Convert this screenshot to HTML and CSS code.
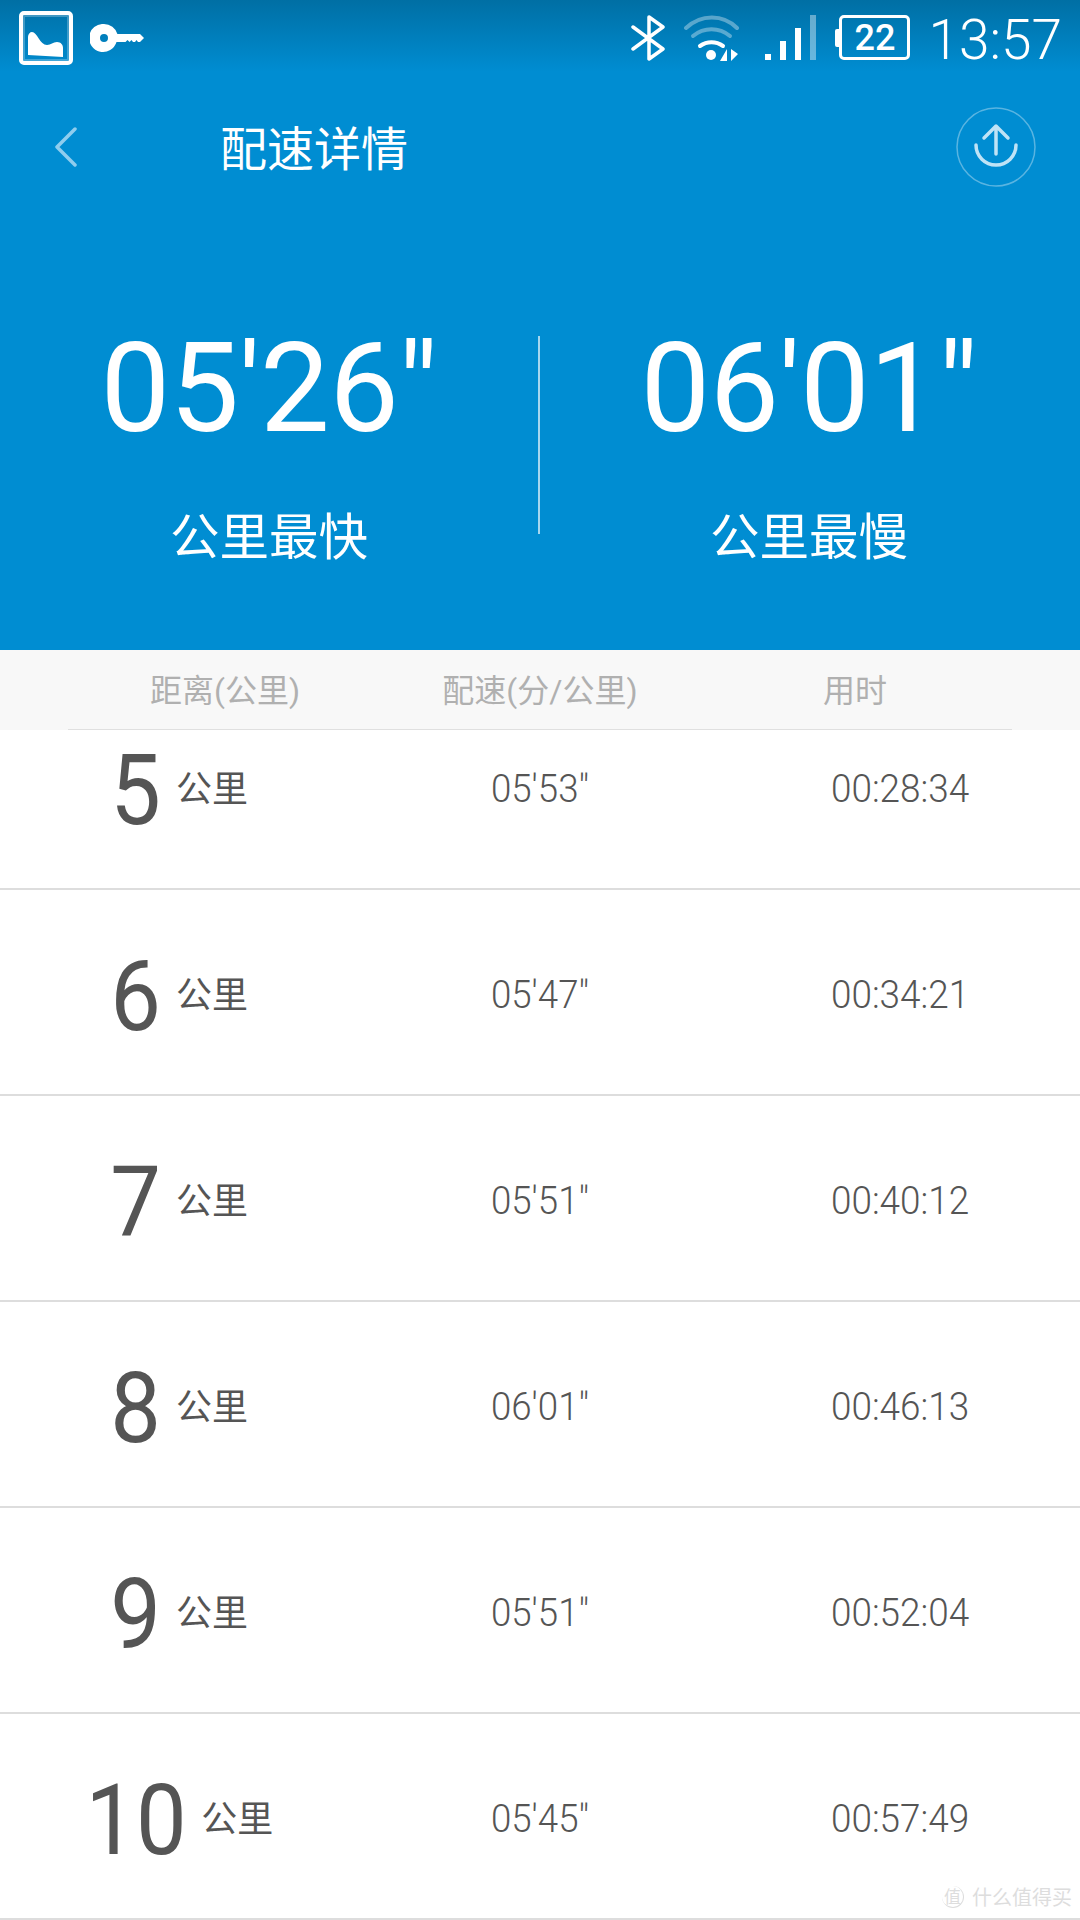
FILE: index.html
```html
<!DOCTYPE html>
<html>
<head>
    <meta charset="utf-8">
    <title>配速详情</title>
    <link rel="stylesheet" href="styles.css">
</head>
<body>
    <div class="hero">
        <div class="statusbar">
            <div class="status-left">
                <svg class="ic-image" width="54" height="54" viewBox="0 0 54 54">
                    <rect x="2" y="2" width="50" height="50" rx="3" fill="none" stroke="#fff" stroke-width="4"/>
                    <rect x="5" y="5" width="44" height="44" fill="none" stroke="#fff" stroke-opacity=".25" stroke-width="2"/>
                    <path d="M9 44V26c0-3 2-5 4-5 5 0 8 13 15 13 4 0 6-3 10-3 4 0 6 3 6 6v9z" fill="#fff"/>
                </svg>
                <svg class="ic-key" width="54" height="28" viewBox="0 0 54 28">
                    <path fill-rule="evenodd" d="M14 0a14 14 0 0 1 13.400 10H50l4 4-4 4h-2l-1.500-2-1.500 2h-2l-1.500-2-2 2-2-2-2 2h-9A14 14 0 1 1 14 0zm0 10a4 4 0 1 0 0 8 4 4 0 0 0 0-8z" fill="#fff"/>
                </svg>
            </div>
            <div class="status-right">
                <svg class="ic-bt" width="37" height="46" viewBox="0 0 37 46">
                    <path d="M2 12l30 22-14 10V2l14 10L2 34" fill="none" stroke="#fff" stroke-width="3.500" stroke-linejoin="round" stroke-linecap="round"/>
                </svg>
                <svg class="ic-wifi" width="56" height="46" viewBox="0 0 56 46">
                    <path d="M2 13C17 -1 39 -1 53 13" fill="none" stroke="#fff" stroke-opacity=".35" stroke-width="4" stroke-linecap="round"/>
                    <path d="M9 21c11-9 26-9 37 0" fill="none" stroke="#fff" stroke-opacity=".35" stroke-width="4" stroke-linecap="round"/>
                    <path d="M16 31c7-5 16-5 23 0" fill="none" stroke="#fff" stroke-width="4" stroke-linecap="round"/>
                    <circle cx="27" cy="40" r="5" fill="#fff"/>
                    <path d="M43 34v12h-7zM47 34v12l7-7z" fill="#fff"/>
                </svg>
                <svg class="ic-signal" width="51" height="45" viewBox="0 0 51 45">
                    <rect x="0" y="39" width="6" height="6" fill="#fff"/>
                    <rect x="15" y="26" width="6" height="19" fill="#fff"/>
                    <rect x="30" y="13" width="6" height="32" fill="#fff"/>
                    <rect x="45" y="0" width="6" height="45" fill="#fff" opacity=".4"/>
                </svg>
                <div class="battery"><span class="battery-text">22</span></div>
                <span class="clock">13:57</span>
            </div>
        </div>

        <div class="navbar">
            <svg class="ic-back" width="24" height="40" viewBox="0 0 24 40">
                <path d="M21 2L3 20l18 18" fill="none" stroke="#8fcdee" stroke-width="3.500" stroke-linecap="round" stroke-linejoin="round"/>
            </svg>
            <span class="nav-title">配速详情</span>
            <svg class="ic-share" width="80" height="80" viewBox="0 0 80 80">
                <circle cx="40" cy="40" r="39" fill="none" stroke="#fff" stroke-opacity=".35" stroke-width="1.500"/>
                <path d="M40 47V20M28 31l12-12 12 12" fill="none" stroke="#bfe3f6" stroke-width="3.500" stroke-linecap="round" stroke-linejoin="round"/>
                <path d="M20 38a20 20 0 1 0 40 0" fill="none" stroke="#bfe3f6" stroke-width="3.500" stroke-linecap="round"/>
            </svg>
        </div>

        <div class="stats">
            <div class="stat">
                <div class="stat-value">05'26"</div>
                <div class="stat-label">公里最快</div>
            </div>
            <div class="stat-divider"></div>
            <div class="stat">
                <div class="stat-value">06'01"</div>
                <div class="stat-label">公里最慢</div>
            </div>
        </div>
    </div>

    <div class="table-head">
        <span>距离(公里)</span>
        <span>配速(分/公里)</span>
        <span>用时</span>
    </div>

    <div class="rows">
        <div class="row row-cut">
            <div class="dist"><span class="num">5</span><span class="unit">公里</span></div>
            <div class="pace">05'53"</div>
            <div class="time">00:28:34</div>
        </div>
        <div class="row">
            <div class="dist"><span class="num">6</span><span class="unit">公里</span></div>
            <div class="pace">05'47"</div>
            <div class="time">00:34:21</div>
        </div>
        <div class="row">
            <div class="dist"><span class="num">7</span><span class="unit">公里</span></div>
            <div class="pace">05'51"</div>
            <div class="time">00:40:12</div>
        </div>
        <div class="row">
            <div class="dist"><span class="num">8</span><span class="unit">公里</span></div>
            <div class="pace">06'01"</div>
            <div class="time">00:46:13</div>
        </div>
        <div class="row">
            <div class="dist"><span class="num">9</span><span class="unit">公里</span></div>
            <div class="pace">05'51"</div>
            <div class="time">00:52:04</div>
        </div>
        <div class="row">
            <div class="dist dist-wide"><span class="num">10</span><span class="unit">公里</span></div>
            <div class="pace">05'45"</div>
            <div class="time">00:57:49</div>
        </div>
    </div>

    <div class="watermark"><span class="watermark-badge">值</span>什么值得买</div>
</body>
</html>
```

FILE: styles.css
```css
* { box-sizing: border-box; }
body { margin: 0; width: 1080px; height: 1920px; overflow: hidden; position: relative; background: #fff; font-family: Roboto, "Noto Sans CJK SC", sans-serif; }

.hero { height: 650px; background: linear-gradient(#006fa4 0, #008dd2 72px); color: #fff; }

.statusbar { height: 72px; display: flex; justify-content: space-between; align-items: flex-start; padding: 11px 18px 0 19px; }
.status-left { display: flex; align-items: center; gap: 17px; }
.status-right { display: flex; align-items: flex-start; margin-top: 4px; }
.ic-bt { margin-right: 2px; }
.ic-wifi { margin-left: 14px; }
.ic-signal { margin-left: 25px; }
.battery { width: 71px; height: 45px; margin-left: 23px; border: 3px solid #fff; border-radius: 5px; display: flex; align-items: center; justify-content: center; position: relative; }
.battery::before { content: ""; position: absolute; left: -7px; top: 11px; width: 4px; height: 18px; background: #fff; border-radius: 2px 0 0 2px; }
.battery-text { font-size: 36px; font-weight: 500; line-height: 1; }
.clock { font-size: 55px; font-weight: 300; line-height: 50px; margin-left: 18px; }

.navbar { height: 146px; display: flex; align-items: center; padding: 0 44px 0 54px; }
.nav-title { font-size: 47px; margin-left: 142px; flex: 1; }
.ic-back { margin-top: 4px; }
.ic-share { margin-top: 3px; }

.stats { display: flex; align-items: flex-start; padding-top: 96px; }
.stat { width: 538px; text-align: center; }
.stat-value { font-size: 124px; line-height: 150px; letter-spacing: -.5px; }
.stat-label { font-size: 49.500px; line-height: 60px; margin-top: 44px; }
.stat-divider { width: 2px; height: 198px; margin-top: 22px; background: rgba(255,255,255,.65); }

.table-head { height: 80px; padding-bottom: 4px; display: grid; grid-template-columns: 450px 180px 1fr; align-items: center; background: #f8f8f8; color: #b0b0b0; font-size: 32px; white-space: nowrap; position: relative; }
.table-head span { justify-self: center; }
.table-head::after { content: ""; position: absolute; left: 68px; right: 68px; bottom: 0; height: 1px; background: #e0e0e0; }

.row { height: 206px; display: grid; grid-template-columns: 450px 180px 1fr; align-items: center; border-bottom: 2px solid #ddd; color: #555; font-size: 39px; font-weight: 300; }
.row-cut { height: 160px; padding-bottom: 46px; }
.dist { display: flex; align-items: center; padding-left: 108px; }
.dist-wide { padding-left: 81px; }
.num { font-size: 98px; font-weight: 400; line-height: 1; margin-top: 10px; transform: scaleX(.92); }
.unit { font-size: 36px; font-weight: 400; margin-left: 13px; }
.dist-wide .unit { margin-left: 10px; }
.pace { padding-top: 6px; text-align: center; transform: scaleX(.94); }
.time { margin-left: 201px; padding-top: 6px; transform: scaleX(.945); transform-origin: left center; }

.watermark { position: absolute; right: 8px; bottom: 9px; display: flex; align-items: center; gap: 8px; font-size: 20px; color: #ddd; }
.watermark-badge { width: 22px; height: 22px; font-size: 17px; line-height: 22px; text-align: center; border-radius: 50%; border-right: 1px solid #ddd; border-bottom: 1px solid #ddd; }
```
